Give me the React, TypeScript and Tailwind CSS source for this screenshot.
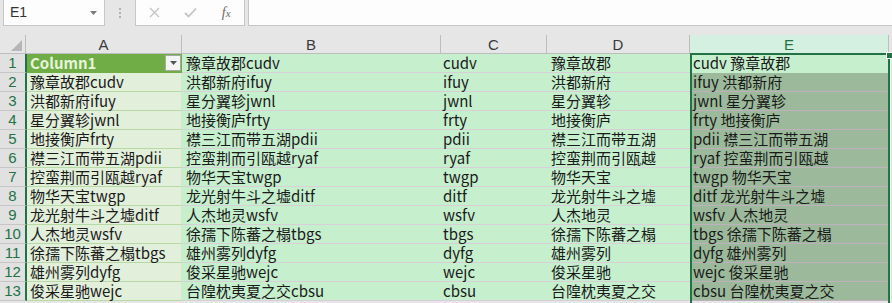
import React from "react";

const rows = [
  { a: "Column1", b: "豫章故郡cudv", c: "cudv", d: "豫章故郡", e: "cudv 豫章故郡" },
  { a: "豫章故郡cudv", b: "洪都新府ifuy", c: "ifuy", d: "洪都新府", e: "ifuy 洪都新府" },
  { a: "洪都新府ifuy", b: "星分翼轸jwnl", c: "jwnl", d: "星分翼轸", e: "jwnl 星分翼轸" },
  { a: "星分翼轸jwnl", b: "地接衡庐frty", c: "frty", d: "地接衡庐", e: "frty 地接衡庐" },
  { a: "地接衡庐frty", b: "襟三江而带五湖pdii", c: "pdii", d: "襟三江而带五湖", e: "pdii 襟三江而带五湖" },
  { a: "襟三江而带五湖pdii", b: "控蛮荆而引瓯越ryaf", c: "ryaf", d: "控蛮荆而引瓯越", e: "ryaf 控蛮荆而引瓯越" },
  { a: "控蛮荆而引瓯越ryaf", b: "物华天宝twgp", c: "twgp", d: "物华天宝", e: "twgp 物华天宝" },
  { a: "物华天宝twgp", b: "龙光射牛斗之墟ditf", c: "ditf", d: "龙光射牛斗之墟", e: "ditf 龙光射牛斗之墟" },
  { a: "龙光射牛斗之墟ditf", b: "人杰地灵wsfv", c: "wsfv", d: "人杰地灵", e: "wsfv 人杰地灵" },
  { a: "人杰地灵wsfv", b: "徐孺下陈蕃之榻tbgs", c: "tbgs", d: "徐孺下陈蕃之榻", e: "tbgs 徐孺下陈蕃之榻" },
  { a: "徐孺下陈蕃之榻tbgs", b: "雄州雾列dyfg", c: "dyfg", d: "雄州雾列", e: "dyfg 雄州雾列" },
  { a: "雄州雾列dyfg", b: "俊采星驰wejc", c: "wejc", d: "俊采星驰", e: "wejc 俊采星驰" },
  { a: "俊采星驰wejc", b: "台隍枕夷夏之交cbsu", c: "cbsu", d: "台隍枕夷夏之交", e: "cbsu 台隍枕夷夏之交" },
];

const cellFont = { fontFamily: '"Noto Sans CJK SC", "Noto Sans", sans-serif' };

export default function App() {
  return (
    <div
      className="relative w-[892px] h-[303px] overflow-hidden bg-[#e6e6e6] text-[#1a1a1a]"
      style={{ fontFamily: '"Liberation Sans", "Noto Sans CJK SC", sans-serif' }}
    >
      {/* Formula bar */}
      <div className="flex h-[26px]">
        <div className="ml-[3px] w-[102px] h-[26px] bg-[#fdfdfd] border-x border-b border-[#c6c6c6] flex items-center justify-between pl-[6px] pr-[7px]">
          <span className="text-[14px] text-[#333]">E1</span>
          <svg width="7" height="4" viewBox="0 0 7 4">
            <path d="M0 0 L7 0 L3.5 4 Z" fill="#7a7a7a" />
          </svg>
        </div>
        <div className="w-[30px] flex flex-col items-center justify-center gap-[2px]">
          <span className="w-[2px] h-[2px] bg-[#b0b0b0]" />
          <span className="w-[2px] h-[2px] bg-[#b0b0b0]" />
          <span className="w-[2px] h-[2px] bg-[#b0b0b0]" />
        </div>
        <div className="w-[110px] h-[26px] bg-[#fdfdfd] border-x border-b border-[#c6c6c6] flex items-center">
          <div className="w-[36px] flex justify-center ml-[1px]">
            <svg width="11" height="11" viewBox="0 0 11 11">
              <path d="M1 1 L10 10 M10 1 L1 10" stroke="#c4c4c4" strokeWidth="1.4" />
            </svg>
          </div>
          <div className="w-[36px] flex justify-center">
            <svg width="13" height="11" viewBox="0 0 13 11">
              <path d="M1 6 L4.5 9.5 L12 1.5" stroke="#c4c4c4" strokeWidth="1.8" fill="none" />
            </svg>
          </div>
          <div className="w-[36px] flex justify-center">
            <span
              className="italic text-[14px] text-[#6a6a6a]"
              style={{ fontFamily: '"Liberation Serif", serif' }}
            >
              f<span className="text-[11px]">x</span>
            </span>
          </div>
        </div>
        <div className="ml-[3px] flex-1 h-[26px] bg-[#fdfdfd] border-l border-b border-[#c6c6c6]" />
      </div>

      {/* Column headers */}
      <div className="mt-[9px] flex h-[19px] text-[15px] text-[#3a3a3a]">
        <div className="w-[26px] border-r border-b border-[#bdbdbd] flex items-end justify-end pr-[3px] pb-[2px]">
          <svg width="11" height="11" viewBox="0 0 11 11">
            <path d="M11 0 L11 11 L0 11 Z" fill="#b6b6b6" />
          </svg>
        </div>
        <div className="w-[156px] border-r border-b border-[#bdbdbd] flex items-center justify-center leading-none">A</div>
        <div className="w-[259px] border-r border-b border-[#bdbdbd] flex items-center justify-center leading-none">B</div>
        <div className="w-[106px] border-r border-b border-[#bdbdbd] flex items-center justify-center leading-none">C</div>
        <div className="w-[143px] border-r border-b border-[#bdbdbd] flex items-center justify-center leading-none">D</div>
        <div className="w-[199px] border-r border-b border-[#bdbdbd] bg-[#d3f0e0] text-[#217346] flex items-center justify-center leading-none">E</div>
        <div className="flex-1 border-b border-[#bdbdbd]" />
      </div>

      {/* Body rows */}
      <div className="flex flex-col text-[15px]" style={cellFont}>
        {rows.map((r, i) => {
          const first = i === 0;
          return (
            <div key={i} className="flex h-[19px] leading-[18px]">
              <div
                className="w-[27px] bg-[#e1e1e1] border-b border-[#c6c6c6] border-r-2 border-r-[#217346] text-[#217346] text-center"
                style={{ fontFamily: '"Liberation Sans", sans-serif' }}
              >
                {i + 1}
              </div>
              {first ? (
                <div className="w-[155px] bg-[#70ad47] border-b border-[#70ad47] flex items-center justify-between pl-[3px] pr-[1px]">
                  <span className="text-[#e6f4d8] font-semibold whitespace-nowrap">{r.a}</span>
                  <span className="w-[16px] h-[16px] bg-[#f4f4f4] border border-[#a8a8a8] flex items-center justify-center">
                    <svg width="7" height="4" viewBox="0 0 7 4">
                      <path d="M0 0 L7 0 L3.5 4 Z" fill="#555" />
                    </svg>
                  </span>
                </div>
              ) : (
                <div className="w-[155px] bg-[#e2efda] border-b border-[#b7d9a4] border-r border-r-[#d3e8c9] pl-[3px] whitespace-nowrap">
                  {r.a}
                </div>
              )}
              <div className="w-[259px] bg-[#c6efce] border-b border-[#d9cfd9] pl-[4px] whitespace-nowrap">{r.b}</div>
              <div className="w-[106px] bg-[#c6efce] border-b border-[#d9cfd9] pl-[2px] whitespace-nowrap">{r.c}</div>
              <div className="w-[143px] bg-[#c6efce] border-b border-[#d9cfd9] pl-[4px] whitespace-nowrap">{r.d}</div>
              <div
                className={`w-[200px] border-b pl-[3px] whitespace-nowrap ${
                  first ? "bg-[#c6efce] border-[#c6efce]" : "bg-[#9cba9b] border-[#bfb0bd]"
                }`}
              >
                {r.e}
              </div>
              <div className="flex-1 bg-[#c6efce] border-l border-white" />
            </div>
          );
        })}
      </div>

      {/* Selection border overlay */}
      <div className="absolute left-[690px] top-[53px] w-[200px] h-[252px] border-2 border-[#217346] pointer-events-none" />
      <div className="absolute left-[886px] top-[52px] w-[7px] h-[7px] bg-[#217346] border border-white" />
    </div>
  );
}
